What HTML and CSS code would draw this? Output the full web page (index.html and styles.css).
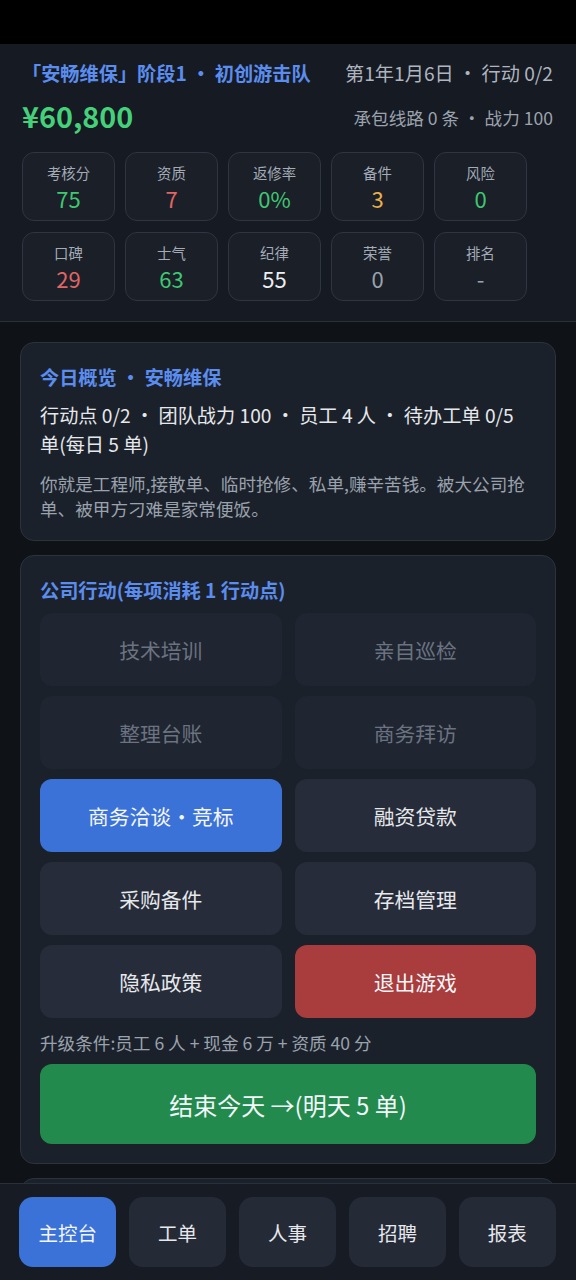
FILE: index.html
```html
<!DOCTYPE html>
<html lang="zh-CN">
<head>
<meta charset="utf-8">
<meta name="viewport" content="width=device-width, initial-scale=1">
<title>安畅维保</title>
<link rel="stylesheet" href="styles.css">
</head>
<body>
<div class="statusbar"></div>
<header class="top">
  <div class="top-row">
    <div class="co-title">「安畅维保」阶段1 · 初创游击队</div>
    <div class="date">第1年1月6日 · 行动 0/2</div>
  </div>
  <div class="top-row second">
    <div class="money">¥60,800</div>
    <div class="meta">承包线路 0 条 · 战力 100</div>
  </div>
  <div class="stats">
    <div class="tile"><div class="lbl">考核分</div><div class="val green">75</div></div>
    <div class="tile"><div class="lbl">资质</div><div class="val red">7</div></div>
    <div class="tile"><div class="lbl">返修率</div><div class="val green">0%</div></div>
    <div class="tile"><div class="lbl">备件</div><div class="val orange">3</div></div>
    <div class="tile"><div class="lbl">风险</div><div class="val green">0</div></div>
    <div class="tile"><div class="lbl">口碑</div><div class="val red">29</div></div>
    <div class="tile"><div class="lbl">士气</div><div class="val green">63</div></div>
    <div class="tile"><div class="lbl">纪律</div><div class="val white">55</div></div>
    <div class="tile"><div class="lbl">荣誉</div><div class="val gray">0</div></div>
    <div class="tile"><div class="lbl">排名</div><div class="val gray">-</div></div>
  </div>
</header>

<main class="main">
  <section class="card overview">
    <h2 class="card-title">今日概览 · 安畅维保</h2>
    <p class="summary">行动点 0/2 · 团队战力 100 · 员工 4 人 · 待办工单 0/5 单(每日 5 单)</p>
    <p class="desc">你就是工程师,接散单、临时抢修、私单,赚辛苦钱。被大公司抢单、被甲方刁难是家常便饭。</p>
  </section>

  <section class="card actions">
    <h2 class="card-title">公司行动(每项消耗 1 行动点)</h2>
    <div class="btn-grid">
      <button class="btn disabled">技术培训</button>
      <button class="btn disabled">亲自巡检</button>
      <button class="btn disabled">整理台账</button>
      <button class="btn disabled">商务拜访</button>
      <button class="btn primary">商务洽谈·竞标</button>
      <button class="btn">融资贷款</button>
      <button class="btn">采购备件</button>
      <button class="btn">存档管理</button>
      <button class="btn">隐私政策</button>
      <button class="btn danger">退出游戏</button>
    </div>
    <p class="upgrade">升级条件:员工 6 人 + 现金 6 万 + 资质 40 分</p>
    <button class="end-day">结束今天 →(明天 5 单)</button>
  </section>

  <section class="card more"></section>
</main>

<nav class="tabbar">
  <button class="tab active">主控台</button>
  <button class="tab">工单</button>
  <button class="tab">人事</button>
  <button class="tab">招聘</button>
  <button class="tab">报表</button>
</nav>
</body>
</html>
```

FILE: styles.css
```css
* { box-sizing: border-box; }

html, body {
  margin: 0;
  padding: 0;
}

body {
  background: #0f1217;
  color: #e6e8ec;
  font-family: "Noto Sans CJK SC", "Noto Sans", sans-serif;
}

.statusbar {
  height: 44px;
  background: #000;
}

.top {
  background: #161a22;
  border-bottom: 1px solid #2a303a;
  padding: 16px 23px 20px 22px;
}

.top-row {
  display: flex;
  justify-content: space-between;
  align-items: center;
  height: 26px;
}

.top-row.second {
  margin-top: 10px;
  height: 40px;
}

.co-title {
  color: #5b8def;
  font-weight: 700;
  font-size: 19.2px;
  line-height: 26px;
}

.date {
  color: #aeb5bf;
  font-size: 19.2px;
  line-height: 26px;
}

.money {
  color: #45d17a;
  font-weight: 700;
  font-size: 28.8px;
  line-height: 40px;
}

.meta {
  color: #9ba3ae;
  font-size: 17.6px;
  line-height: 26px;
  padding-top: 3px;
}

.stats {
  margin-top: 16px;
  display: grid;
  grid-template-columns: repeat(5, 93px);
  grid-auto-rows: 69px;
  column-gap: 10px;
  row-gap: 11px;
}

.tile {
  border: 1.5px solid #2f3642;
  border-radius: 12px;
  background: #1a1f28;
  display: flex;
  flex-direction: column;
  align-items: center;
  padding-top: 10px;
}

.lbl {
  font-size: 14.4px;
  line-height: 20px;
  color: #a3abb6;
}

.val {
  font-size: 22px;
  line-height: 28px;
  margin-top: 1px;
}

.green { color: #3fc772; }
.red { color: #e06565; }
.orange { color: #eab14a; }
.white { color: #eceef1; }
.gray { color: #9aa2ad; }

.main {
  padding: 20px 20px 0;
  display: flex;
  flex-direction: column;
  gap: 14px;
}

.card {
  background: #1b212a;
  border: 1px solid #2c333d;
  border-radius: 14px;
  padding: 20px 19px 19px;
}

.card-title {
  margin: 0;
  color: #5b8def;
  font-weight: 700;
  font-size: 19.2px;
  line-height: 28px;
}

.summary {
  margin: 10px 0 0;
  font-size: 19.2px;
  line-height: 29px;
  color: #e6e8ec;
}

.desc {
  margin: 12px 0 0;
  font-size: 17.6px;
  line-height: 25px;
  color: #9aa2ad;
}

.btn-grid {
  margin-top: 9px;
  display: grid;
  grid-template-columns: 1fr 1fr;
  grid-auto-rows: 73px;
  column-gap: 13px;
  row-gap: 10px;
}

.btn {
  border: none;
  border-radius: 12px;
  background: #262c39;
  color: #e6e8ec;
  font-family: inherit;
  font-size: 20.8px;
  padding: 0;
}

.btn.disabled {
  background: #1f2531;
  color: #6b7380;
}

.btn.primary {
  background: #3b72d8;
  color: #f4f6fa;
}

.btn.danger {
  background: #a93c3c;
  color: #f4f6fa;
}

.upgrade {
  margin: 13px 0 0;
  font-size: 17.6px;
  line-height: 24px;
  color: #9aa2ad;
}

.end-day {
  display: block;
  width: 100%;
  margin-top: 9px;
  height: 80px;
  border: none;
  border-radius: 12px;
  background: #218a4c;
  color: #f4f6fa;
  font-family: inherit;
  font-size: 24px;
}

.card.more {
  min-height: 200px;
}

.tabbar {
  position: fixed;
  left: 0;
  right: 0;
  bottom: 0;
  height: 97px;
  background: #171b23;
  border-top: 1px solid #2a303a;
  display: flex;
  gap: 12.5px;
  padding: 13px 20px 13px 19px;
}

.tab {
  flex: 1;
  height: 70px;
  border: none;
  border-radius: 14px;
  background: #252a37;
  color: #e6e8ec;
  font-family: inherit;
  font-size: 19.5px;
  padding: 0;
}

.tab.active {
  background: #3b72d8;
  color: #f4f6fa;
}
```
